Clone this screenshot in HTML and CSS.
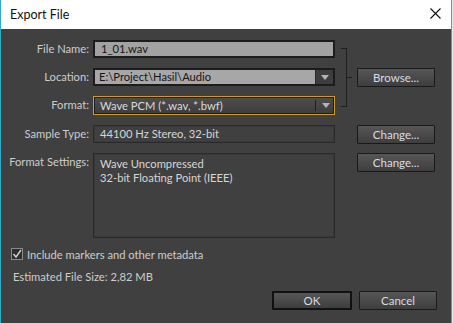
FILE: index.html
```html
<!DOCTYPE html>
<html lang="en">
<head>
  <meta charset="UTF-8" />
  <title>Export File</title>
  <link rel="stylesheet" href="styles.css">
</head>
<body>

  <div class="window">
    <div class="titlebar">
      <span class="title">Export File</span>
      <svg class="close" width="11" height="11" viewBox="0 0 11 11">
        <path d="M0.5 0.5 L10.5 10.5 M10.5 0.5 L0.5 10.5" stroke="#111" stroke-width="1.1" fill="none" />
      </svg>
    </div>

    <div class="content">
      <div class="form-grid">
        <div class="lbl">File Name:</div>
        <div class="fld text-field light">1_01.wav</div>

        <div class="lbl">Location:</div>
        <div class="fld combo">
          <div class="combo-text light">E:\Project\Hasil\Audio</div>
          <div class="combo-btn"><span class="arrow"></span></div>
        </div>

        <div class="lbl">Format:</div>
        <div class="fld dropdown">
          <div class="dropdown-text">Wave PCM (*.wav, *.bwf)</div>
          <div class="dropdown-btn"><span class="arrow"></span></div>
        </div>

        <div class="lbl">Sample Type:</div>
        <div class="fld text-field dark">44100 Hz Stereo, 32-bit</div>
        <button class="btn side-btn">Change...</button>

        <div class="lbl lbl-top">Format Settings:</div>
        <div class="fld settings-box">
          <div>Wave Uncompressed</div>
          <div>32-bit Floating Point (IEEE)</div>
        </div>
        <button class="btn side-btn">Change...</button>

        <div class="bracket">
          <span class="bracket-arm"></span>
          <span class="bracket-tick"></span>
        </div>
        <button class="btn browse-btn">Browse...</button>
      </div>

      <div class="check-row">
        <svg class="checkbox" width="12" height="12" viewBox="0 0 12 12">
          <rect x="0.5" y="0.5" width="11" height="11" fill="#2e2e2e" stroke="#8a8a8a" />
          <path d="M2.5 6 L5 9 L10 2" stroke="#d0d0d0" stroke-width="1.4" fill="none" />
        </svg>
        <span>Include markers and other metadata</span>
      </div>

      <div class="size-row">Estimated File Size: 2,82 MB</div>

      <div class="button-row">
        <button class="btn default-btn">OK</button>
        <button class="btn">Cancel</button>
      </div>
    </div>
  </div>

</body>
</html>
```

FILE: styles.css
```css
body {
  margin: 0;
  background-color: #e9e9e9;
  font-family: 'Lato', 'Noto Sans', sans-serif;
  font-size: 11.2px;
}

.window {
  width: 452px;
  height: 323px;
  box-sizing: border-box;
  border-left: 1px solid #2badcb;
  border-right: 1px solid #2badcb;
  background-color: #404040;
  display: flex;
  flex-direction: column;
}

.titlebar {
  height: 29px;
  background-color: #fff;
  display: flex;
  align-items: center;
  justify-content: space-between;
  padding: 0 10px 0 9px;
  flex-shrink: 0;
}

.title {
  color: #111;
  font-size: 12.5px;
}

.close {
  margin-top: -2px;
}

.content {
  padding: 11px 14px 0 8px;
  color: #cdcdcd;
}

.form-grid {
  display: grid;
  grid-template-columns: 80px 242px 14px 78px;
  grid-template-rows: 18px 18px 19px 18px 85px;
  column-gap: 4px;
  row-gap: 10px;
}

.lbl {
  grid-column: 1;
  text-align: right;
  line-height: 18px;
  white-space: nowrap;
}

.lbl-top {
  line-height: 14px;
  padding-top: 2px;
}

.fld {
  grid-column: 2;
  box-sizing: border-box;
}

.text-field {
  padding: 0 6px;
  line-height: 14px;
  white-space: nowrap;
}

.light {
  background-color: #a2a2a2;
  color: #151515;
}

.text-field.light {
  border: 2px solid #1c1c1c;
}

.text-field.dark {
  border: 1px solid #2a2a2a;
  box-shadow: inset 0 0 0 1px #393939;
  line-height: 16px;
  color: #d6d6d6;
}

.combo {
  display: flex;
  border: 2px solid #1c1c1c;
}

.combo-text {
  flex: 1;
  padding: 0 4px;
  line-height: 14px;
  background-color: #a7a7a7;
}

.combo-btn {
  width: 17px;
  background-color: #3d3d3d;
  border-left: 1px solid #2a2a2a;
  display: flex;
  align-items: center;
  justify-content: center;
}

.dropdown {
  display: flex;
  border: 1px solid #d19b1f;
  box-shadow: inset 0 0 0 1px #1e1e1e;
  background: linear-gradient(#4e4e4e, #3d3d3d);
  color: #dadada;
}

.dropdown-text {
  flex: 1;
  padding: 0 6px;
  line-height: 17px;
}

.dropdown-btn {
  width: 18px;
  margin: 3px 0;
  border-left: 1px solid #1f1f1f;
  display: flex;
  align-items: center;
  justify-content: center;
}

.arrow {
  width: 0;
  height: 0;
  border-left: 4px solid transparent;
  border-right: 4px solid transparent;
  border-top: 5px solid #b4b4b4;
  margin-left: 1px;
}

.settings-box {
  border: 1px solid #2a2a2a;
  box-shadow: inset 0 0 0 1px #393939;
  padding: 3px 6px;
  line-height: 14px;
  color: #d6d6d6;
}

.bracket {
  grid-column: 3;
  grid-row: 1 / 4;
  display: flex;
  align-items: center;
  margin: 8px 0 8px 2px;
}

.bracket-arm {
  align-self: stretch;
  width: 5px;
  border: 1px solid #1f1f1f;
  border-left: none;
}

.bracket-tick {
  width: 5px;
  border-top: 1px solid #1f1f1f;
}

.btn {
  font-family: inherit;
  font-size: 11.5px;
  color: #d8dde2;
  background: linear-gradient(#565656, #3e3e3e);
  border: 1px solid #1a1a1a;
  border-radius: 1px;
  padding: 0;
  height: 19px;
  line-height: 15px;
}

.side-btn {
  grid-column: 4;
  align-self: start;
}

.browse-btn {
  grid-column: 4;
  grid-row: 2;
}

.check-row {
  display: flex;
  align-items: center;
  gap: 4px;
  margin-top: 10px;
  padding-left: 2px;
  height: 12px;
}

.size-row {
  padding-left: 4px;
  margin-top: 9px;
  line-height: 15px;
}

.button-row {
  display: flex;
  justify-content: flex-end;
  gap: 7px;
  margin-top: 7px;
}

.button-row .btn {
  width: 78px;
}

.button-row .default-btn {
  width: 80px;
  border: 2px solid #111;
}
```
